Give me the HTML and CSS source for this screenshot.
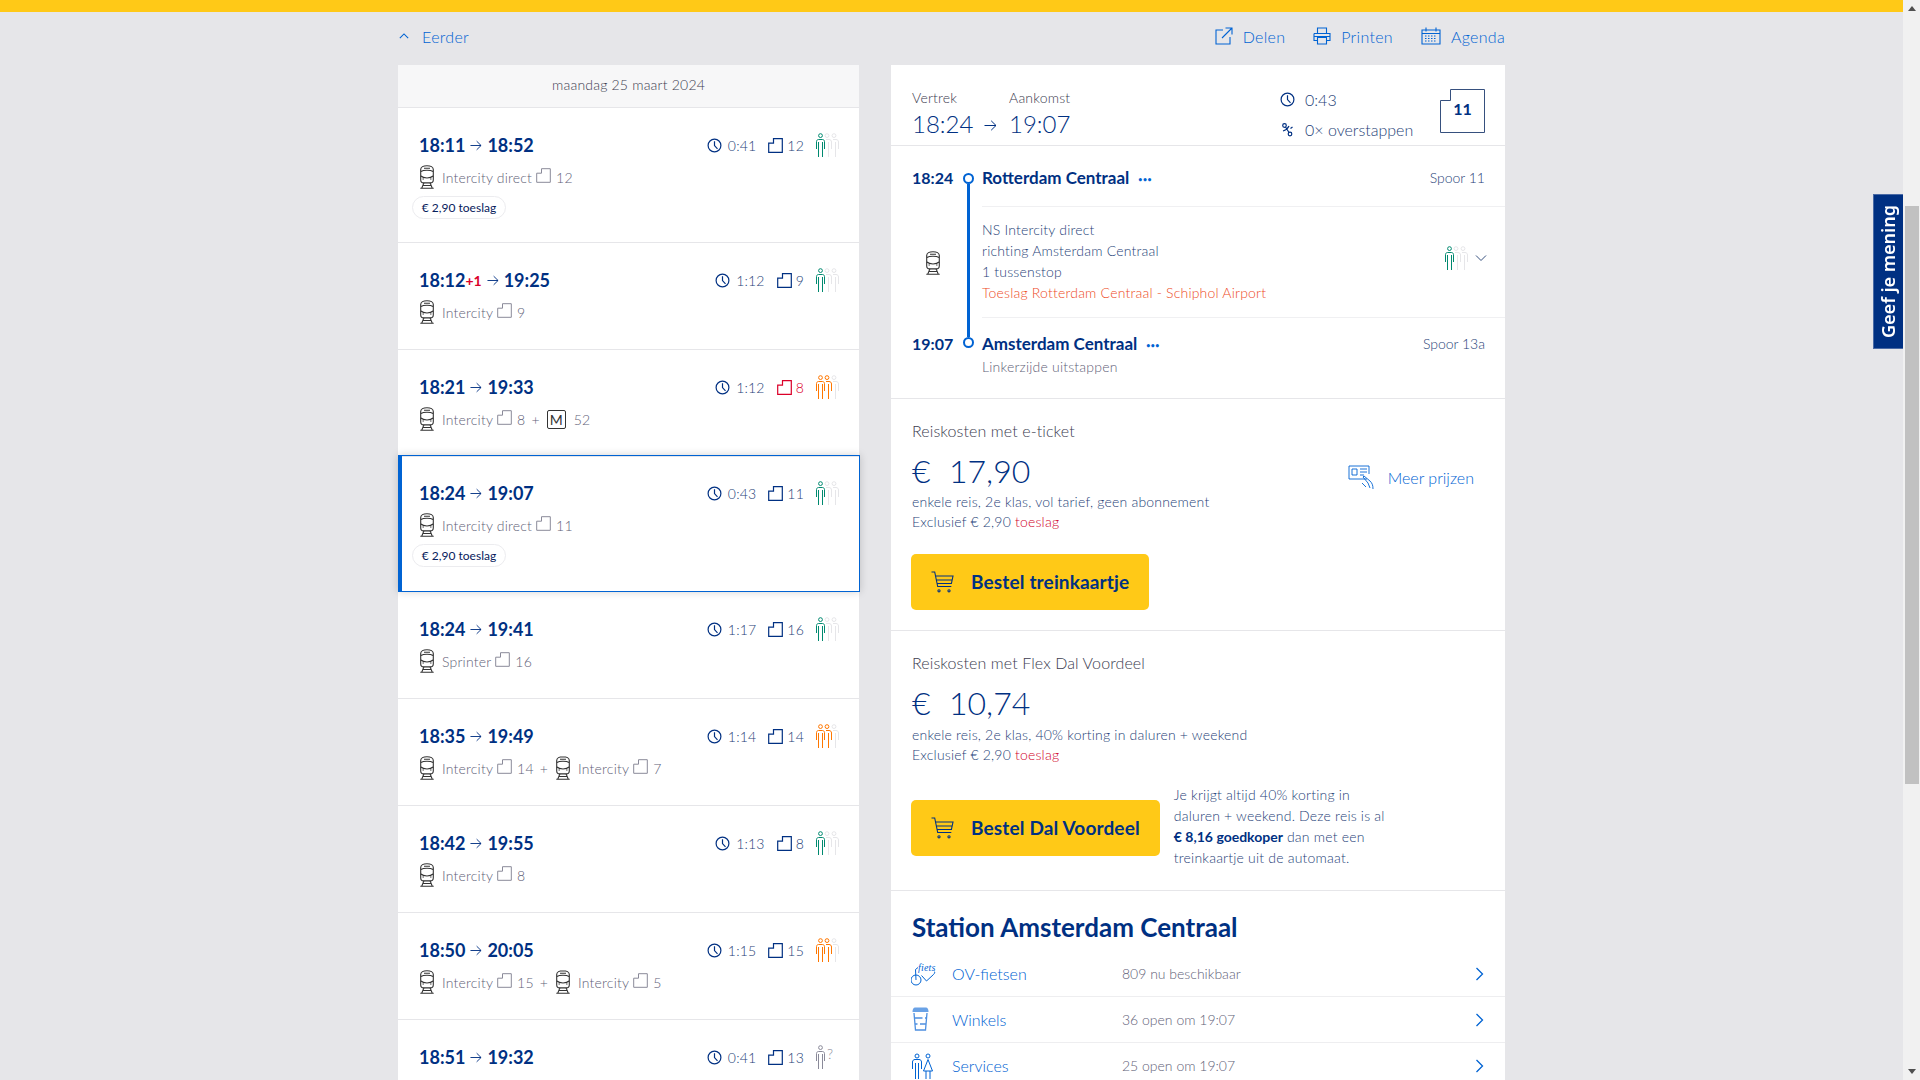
FILE: index.html

```html
<!DOCTYPE html>
<html lang="nl">
<head>
  <meta charset="UTF-8">
  <title>Reisplanner</title>
  <link rel="stylesheet" href="styles.css">
</head>
<body>
  <svg class="defs" width="0" height="0">
    <symbol id="i-clock" viewBox="0 0 15 15"><circle cx="7.5" cy="7.5" r="6.4"/><path d="M7.5 3.2v4.4l3 3.2"/></symbol>
    <symbol id="i-platform" viewBox="0 0 15 15"><path d="M5.5.7h8.8v13.6H.7V5.2h4.8z"/></symbol>
    <symbol id="i-arrow" viewBox="0 0 13 11"><path d="M.5 5.5h11.5M7.2.8l4.8 4.7-4.8 4.7"/></symbol>
    <symbol id="i-train" viewBox="0 0 15 24"><path d="M7.5.8C3.8.8 1.2 1.8 1.2 4.5v10.2c0 2 1.3 3.2 3 3.2h6.6c1.7 0 3-1.2 3-3.2V4.5C13.8 1.8 11.2.8 7.5.8z"/><path d="M1.4 6.5c2.6-1.6 9.6-1.6 12.2 0M1.4 11c2.6 2.6 9.6 2.6 12.2 0M4.5 3.2h6M4.4 17.9l-2.2 5.3M10.6 17.9l2.2 5.3M.8 23.2h13.4M3.3 20.5h8.4M3 14h1.4M10.6 14H12"/></symbol>
    <symbol id="i-crowd" viewBox="0 0 24 24">
      <g class="p3"><circle cx="19" cy="2.600" r="1.900"/><path d="M18 6.500h3c1.500 0 2.500 1 2.500 2.500v7M20.500 24V9"/></g>
      <g class="p2"><circle cx="12" cy="2.600" r="1.900"/><path d="M11 6.500h3c1.500 0 2.500 1 2.500 2.500v7M13.500 24V9"/></g>
      <g class="p1"><circle cx="5.500" cy="2.600" r="1.900"/><path d="M1.500 16V8.500c0-1.100.9-2 2-2h4c1.100 0 2 .9 2 2V16M3.500 24V9M7.500 24V9"/></g>
    </symbol>
    <symbol id="i-crowd-unknown" viewBox="0 0 24 24">
      <g class="p1"><circle cx="5.500" cy="2.600" r="1.900"/><path d="M1.500 16V8.500c0-1.100.9-2 2-2h4c1.100 0 2 .9 2 2V16M3.500 24V9M7.500 24V9"/></g>
    </symbol>
    <symbol id="i-chevron" viewBox="0 0 12 12"><path d="M1 3.5l5 5 5-5"/></symbol>
    <symbol id="i-next" viewBox="0 0 9 14"><path d="M1.5 1l6 6-6 6"/></symbol>
    <symbol id="i-cart" viewBox="0 0 23 22"><path d="M.5 1h3.2l3 14.5h13.6M4.5 5h17.5l-1.6 7.5H6.100M5.500 9h16"/><circle cx="8" cy="19.800" r="1.100"/><circle cx="18" cy="19.800" r="1.100"/></symbol>
  </svg>

  <div class="viewport">
    <div class="main">
      <div class="topbar"></div>
      <div class="content">
        <div class="toolbar">
          <a class="link earlier"><svg class="ico-up"><use href="#i-chevron"/></svg>Eerder</a>
          <div class="actions">
            <a class="link action">
              <svg class="ico-action" viewBox="0 0 18 18"><path d="M8 3H1v14h14v-7M7 11L16.500 1.500M10.500 1H17v6.500"/></svg>Delen
            </a>
            <a class="link action">
              <svg class="ico-action" viewBox="0 0 18 18"><path d="M4.500 6V1h9v5M1 6.500h16v7h-3.500M4.500 13.500H1v-7M4.500 10.500h9V17h-9zM1 9.500h16"/></svg>Printen
            </a>
            <a class="link action">
              <svg class="ico-action wide" viewBox="0 0 20 18"><path d="M1 3h18v14H1zM1 6.500h18M5 .5v4M15 .5v4"/><path class="dots" d="M4 9h12M4 11.500h12M4 14h12"/></svg>Agenda
            </a>
          </div>
        </div>

        <div class="columns">
          <section class="trips">
            <div class="date">maandag 25 maart 2024</div>

            <article class="trip">
              <div class="trip-head">
                <div class="trip-times">18:11<svg class="ico-arrow"><use href="#i-arrow"/></svg>18:52</div>
                <div class="trip-stats">
                  <svg class="ico-clock"><use href="#i-clock"/></svg><span class="dur">0:41</span>
                  <svg class="ico-plat"><use href="#i-platform"/></svg><span class="num">12</span>
                  <svg class="crowd one"><use href="#i-crowd"/></svg>
                </div>
              </div>
              <div class="legs">
                <svg class="ico-train"><use href="#i-train"/></svg><span>Intercity direct</span>
                <svg class="ico-plat-grey"><use href="#i-platform"/></svg><span>12</span>
              </div>
              <div class="pill">€ 2,90 toeslag</div>
            </article>

            <article class="trip">
              <div class="trip-head">
                <div class="trip-times">18:12<span class="delay">+1</span><svg class="ico-arrow"><use href="#i-arrow"/></svg>19:25</div>
                <div class="trip-stats">
                  <svg class="ico-clock"><use href="#i-clock"/></svg><span class="dur">1:12</span>
                  <svg class="ico-plat"><use href="#i-platform"/></svg><span class="num">9</span>
                  <svg class="crowd one"><use href="#i-crowd"/></svg>
                </div>
              </div>
              <div class="legs">
                <svg class="ico-train"><use href="#i-train"/></svg><span>Intercity</span>
                <svg class="ico-plat-grey"><use href="#i-platform"/></svg><span>9</span>
              </div>
            </article>

            <article class="trip">
              <div class="trip-head">
                <div class="trip-times">18:21<svg class="ico-arrow"><use href="#i-arrow"/></svg>19:33</div>
                <div class="trip-stats">
                  <svg class="ico-clock"><use href="#i-clock"/></svg><span class="dur">1:12</span>
                  <svg class="ico-plat changed"><use href="#i-platform"/></svg><span class="num changed">8</span>
                  <svg class="crowd two"><use href="#i-crowd"/></svg>
                </div>
              </div>
              <div class="legs">
                <svg class="ico-train"><use href="#i-train"/></svg><span>Intercity</span>
                <svg class="ico-plat-grey"><use href="#i-platform"/></svg><span>8</span>
                <span class="plus">+</span><span class="metro">M</span><span class="metro-num">52</span>
              </div>
            </article>

            <article class="trip selected">
              <div class="trip-head">
                <div class="trip-times">18:24<svg class="ico-arrow"><use href="#i-arrow"/></svg>19:07</div>
                <div class="trip-stats">
                  <svg class="ico-clock"><use href="#i-clock"/></svg><span class="dur">0:43</span>
                  <svg class="ico-plat"><use href="#i-platform"/></svg><span class="num">11</span>
                  <svg class="crowd one"><use href="#i-crowd"/></svg>
                </div>
              </div>
              <div class="legs">
                <svg class="ico-train"><use href="#i-train"/></svg><span>Intercity direct</span>
                <svg class="ico-plat-grey"><use href="#i-platform"/></svg><span>11</span>
              </div>
              <div class="pill">€ 2,90 toeslag</div>
            </article>

            <article class="trip">
              <div class="trip-head">
                <div class="trip-times">18:24<svg class="ico-arrow"><use href="#i-arrow"/></svg>19:41</div>
                <div class="trip-stats">
                  <svg class="ico-clock"><use href="#i-clock"/></svg><span class="dur">1:17</span>
                  <svg class="ico-plat"><use href="#i-platform"/></svg><span class="num">16</span>
                  <svg class="crowd one"><use href="#i-crowd"/></svg>
                </div>
              </div>
              <div class="legs">
                <svg class="ico-train"><use href="#i-train"/></svg><span>Sprinter</span>
                <svg class="ico-plat-grey"><use href="#i-platform"/></svg><span>16</span>
              </div>
            </article>

            <article class="trip">
              <div class="trip-head">
                <div class="trip-times">18:35<svg class="ico-arrow"><use href="#i-arrow"/></svg>19:49</div>
                <div class="trip-stats">
                  <svg class="ico-clock"><use href="#i-clock"/></svg><span class="dur">1:14</span>
                  <svg class="ico-plat"><use href="#i-platform"/></svg><span class="num">14</span>
                  <svg class="crowd two"><use href="#i-crowd"/></svg>
                </div>
              </div>
              <div class="legs">
                <svg class="ico-train"><use href="#i-train"/></svg><span>Intercity</span>
                <svg class="ico-plat-grey"><use href="#i-platform"/></svg><span>14</span>
                <span class="plus">+</span>
                <svg class="ico-train"><use href="#i-train"/></svg><span>Intercity</span>
                <svg class="ico-plat-grey"><use href="#i-platform"/></svg><span>7</span>
              </div>
            </article>

            <article class="trip">
              <div class="trip-head">
                <div class="trip-times">18:42<svg class="ico-arrow"><use href="#i-arrow"/></svg>19:55</div>
                <div class="trip-stats">
                  <svg class="ico-clock"><use href="#i-clock"/></svg><span class="dur">1:13</span>
                  <svg class="ico-plat"><use href="#i-platform"/></svg><span class="num">8</span>
                  <svg class="crowd one"><use href="#i-crowd"/></svg>
                </div>
              </div>
              <div class="legs">
                <svg class="ico-train"><use href="#i-train"/></svg><span>Intercity</span>
                <svg class="ico-plat-grey"><use href="#i-platform"/></svg><span>8</span>
              </div>
            </article>

            <article class="trip">
              <div class="trip-head">
                <div class="trip-times">18:50<svg class="ico-arrow"><use href="#i-arrow"/></svg>20:05</div>
                <div class="trip-stats">
                  <svg class="ico-clock"><use href="#i-clock"/></svg><span class="dur">1:15</span>
                  <svg class="ico-plat"><use href="#i-platform"/></svg><span class="num">15</span>
                  <svg class="crowd two"><use href="#i-crowd"/></svg>
                </div>
              </div>
              <div class="legs">
                <svg class="ico-train"><use href="#i-train"/></svg><span>Intercity</span>
                <svg class="ico-plat-grey"><use href="#i-platform"/></svg><span>15</span>
                <span class="plus">+</span>
                <svg class="ico-train"><use href="#i-train"/></svg><span>Intercity</span>
                <svg class="ico-plat-grey"><use href="#i-platform"/></svg><span>5</span>
              </div>
            </article>

            <article class="trip">
              <div class="trip-head">
                <div class="trip-times">18:51<svg class="ico-arrow"><use href="#i-arrow"/></svg>19:32</div>
                <div class="trip-stats">
                  <svg class="ico-clock"><use href="#i-clock"/></svg><span class="dur">0:41</span>
                  <svg class="ico-plat"><use href="#i-platform"/></svg><span class="num">13</span>
                  <span class="crowd-q"><svg class="crowd unknown"><use href="#i-crowd-unknown"/></svg><span class="q">?</span></span>
                </div>
              </div>
            </article>
          </section>

          <section class="detail">
            <header class="summary">
              <div class="sum-times">
                <span class="sum-label">Vertrek</span><span class="sum-label">Aankomst</span>
                <span class="sum-time">18:24<svg class="ico-arrow big"><use href="#i-arrow"/></svg></span><span class="sum-time">19:07</span>
              </div>
              <div class="sum-stats">
                <div class="sum-stat"><svg class="ico-clock"><use href="#i-clock"/></svg>0:43</div>
                <div class="sum-stat">
                  <svg class="ico-clock" viewBox="0 0 15 15"><circle cx="4.500" cy="3.500" r="1.800"/><circle cx="10" cy="12" r="1.800"/><path d="M5.500 5l3.500 5.500M9 4c-1.500 3-4 4.500-6 5M12.500 5l-2 1.500"/></svg>0× overstappen
                </div>
              </div>
              <div class="sum-spoor">
                <svg class="spoor-shape" viewBox="0 0 45 44"><path d="M10.500.5h34v43H.5V11.500h10z"/></svg>
                <span class="spoor-num">11</span>
              </div>
            </header>

            <div class="route">
              <div class="rail"><span class="rail-dot"></span><span class="rail-line"></span><span class="rail-dot"></span></div>

              <div class="stop-time">18:24</div>
              <div class="stop first">
                <div class="stop-name">Rotterdam Centraal<span class="more-dots">•••</span></div>
                <div class="spoor">Spoor 11</div>
              </div>

              <div class="ride-icon"><svg class="ico-train light"><use href="#i-train"/></svg></div>
              <div class="ride">
                <div class="ride-text">
                  <div>NS Intercity direct</div>
                  <div>richting Amsterdam Centraal</div>
                  <div>1 tussenstop</div>
                  <div class="surcharge">Toeslag Rotterdam Centraal - Schiphol Airport</div>
                </div>
                <div class="ride-side">
                  <svg class="crowd one"><use href="#i-crowd"/></svg>
                  <svg class="ico-down"><use href="#i-chevron"/></svg>
                </div>
              </div>

              <div class="stop-time last-time">19:07</div>
              <div class="stop last">
                <div>
                  <div class="stop-name">Amsterdam Centraal<span class="more-dots">•••</span></div>
                  <div class="stop-note">Linkerzijde uitstappen</div>
                </div>
                <div class="spoor">Spoor 13a</div>
              </div>
            </div>

            <div class="fare">
              <div class="fare-top">
                <div>
                  <div class="fare-title">Reiskosten met e-ticket</div>
                  <div class="fare-price"><span class="euro">€</span>17,90</div>
                  <div class="fare-line">enkele reis, 2e klas, vol tarief, geen abonnement</div>
                  <div class="fare-line">Exclusief € 2,90 <span class="red">toeslag</span></div>
                </div>
                <a class="link more-prices">
                  <svg class="ico-prices" viewBox="0 0 28 24"><path d="M19 14H1V1h20v8M4 4h5v6H4zM12 4h7M12 7h7M12 10h4M15 12l5 6 2 5M15 12l1-1 6 5c2 2 3 4 3 8M14 18l4 4"/></svg>Meer prijzen
                </a>
              </div>
              <div class="fare-order">
                <a class="btn"><svg class="ico-cart"><use href="#i-cart"/></svg>Bestel treinkaartje</a>
              </div>
            </div>

            <div class="fare flex">
              <div class="fare-title">Reiskosten met Flex Dal Voordeel</div>
              <div class="fare-price"><span class="euro">€</span>10,74</div>
              <div class="fare-line">enkele reis, 2e klas, 40% korting in daluren + weekend</div>
              <div class="fare-line">Exclusief € 2,90 <span class="red">toeslag</span></div>
              <div class="fare-order with-note">
                <a class="btn"><svg class="ico-cart"><use href="#i-cart"/></svg>Bestel Dal Voordeel</a>
                <p class="fare-note">Je krijgt altijd 40% korting in<br>daluren + weekend. Deze reis is al<br><strong>€ 8,16 goedkoper</strong> dan met een<br>treinkaartje uit de automaat.</p>
              </div>
            </div>

            <div class="station">
              <h2>Station Amsterdam Centraal</h2>
              <a class="facility">
                <svg class="ico-fac" viewBox="0 0 26 26"><text class="fiets" x="7" y="10">fiets</text><circle cx="5" cy="19" r="5"/><path d="M5 19L4.500 8.500 7 6.500M10.500 14.500l5 5.500 7-6.500c1.500-1.500 1.500-2.500.5-3"/></svg>
                <span class="fac-name">OV-fietsen</span><span class="fac-meta">809 nu beschikbaar</span>
                <svg class="ico-next"><use href="#i-next"/></svg>
              </a>
              <a class="facility">
                <svg class="ico-fac cup" viewBox="0 0 26 26"><path class="solid" d="M4 .5h11c1.500 0 2.500 1.500 2.500 4.500H1.500C1.500 2 2.500.5 4 .5z"/><path d="M3 6l1.500 17h10L16 6M3.500 11h8M14 11h2M4.500 17h2M9 17h6.500"/></svg>
                <span class="fac-name">Winkels</span><span class="fac-meta">36 open om 19:07</span>
                <svg class="ico-next"><use href="#i-next"/></svg>
              </a>
              <a class="facility">
                <svg class="ico-fac" viewBox="0 0 26 26"><circle cx="6" cy="3" r="2"/><circle cx="17" cy="3" r="2"/><path d="M1.500 16V9c0-1.500 1-2.500 2.500-2.500h4c1.500 0 2.500 1 2.500 2.500v7M4.500 26V10M7.500 26V10M17 6.500l-4.500 11.500h9L17 6.500zM15 18v8M19 18v8"/></svg>
                <span class="fac-name">Services</span><span class="fac-meta">25 open om 19:07</span>
                <svg class="ico-next"><use href="#i-next"/></svg>
              </a>
            </div>
          </section>
        </div>
      </div>
    </div>

    <div class="scrollbar">
      <span class="sb-up"></span>
      <span class="sb-track short"></span>
      <span class="sb-thumb"></span>
      <span class="sb-track"></span>
      <span class="sb-down"></span>
    </div>
  </div>

  <a class="feedback">Geef je mening</a>
</body>
</html>
```

FILE: styles.css

```css
/* base */
* {
  box-sizing: border-box;
}

html,
body {
  height: 100%;
  margin: 0;
  overflow: hidden;
}

body {
  font-family: Lato, "Open Sans", sans-serif;
  font-size: 14px;
  font-weight: 300;
  letter-spacing: 0.2px;
  color: #003082;
  background-color: #e6e6e9;
}

svg {
  display: block;
  flex: none;
  fill: none;
  stroke: currentColor;
}

.defs {
  position: absolute;
}

.link {
  color: #0063d3;
}

.viewport {
  display: flex;
  height: 1080px;
}

.main {
  flex: 1;
  min-width: 0;
  overflow: hidden;
}

.topbar {
  height: 12px;
  background-color: #ffc917;
}

.content {
  width: 1107px;
  margin: 0 auto;
}

/* toolbar */
.toolbar {
  display: flex;
  justify-content: space-between;
  align-items: center;
  height: 53px;
  padding-bottom: 5px;
  font-size: 16px;
  letter-spacing: 0.3px;
}

.earlier {
  display: flex;
  align-items: center;
  gap: 13px;
}

.ico-up {
  width: 10px;
  height: 10px;
  margin-left: 1px;
  transform: rotate(180deg);
  stroke-width: 1.300;
}

.actions {
  display: flex;
  gap: 28px;
}

.action {
  display: flex;
  align-items: center;
  gap: 10px;
}

.ico-action {
  width: 18px;
  height: 18px;
  stroke-width: 1.1;
}

.ico-action.wide {
  width: 20px;
}

.ico-action .dots {
  stroke-dasharray: 1.500 1.500;
}

/* columns */
.columns {
  display: flex;
  justify-content: space-between;
  align-items: flex-start;
}

.trips {
  width: 461px;
  background-color: #fff;
}

.detail {
  width: 614px;
  background-color: #fff;
}

.date {
  height: 43px;
  padding-top: 11px;
  text-align: center;
  color: #3c3c50;
  background-color: #f7f7f8;
  border-bottom: 1px solid #e6e6e9;
}

/* trip rows */
.trip {
  padding: 23px 20px 23px 21px;
  border-bottom: 1px solid #e6e6e9;
}

.trip.selected {
  position: relative;
  width: 462px;
  margin-top: -2px;
  padding: 23px 20px 24px 17px;
  border: 1px solid #0063d3;
  border-left-width: 4px;
  box-shadow: 0 0 8px rgba(0, 0, 0, 0.18);
}

.trip-head {
  display: flex;
  justify-content: space-between;
  align-items: center;
  height: 28px;
}

.trip-times {
  display: flex;
  align-items: center;
  font-size: 18px;
  font-weight: 700;
  letter-spacing: 0;
}

.ico-arrow {
  width: 12px;
  height: 11px;
  margin: 1px 5px 0;
  stroke-width: 1;
}

.ico-arrow.big {
  display: inline-block;
  width: 13px;
  margin: 4px 0 0 11px;
}

.delay {
  font-size: 14px;
  font-weight: 700;
  color: #db0029;
}

.trip-stats {
  display: flex;
  align-items: center;
  color: #1f3f78;
}

.ico-clock {
  width: 15px;
  height: 15px;
  color: #003082;
  stroke-width: 1.200;
}

.dur {
  margin: 0 12px 0 6px;
}

.ico-plat {
  width: 15px;
  height: 15px;
  color: #003082;
  stroke-width: 1.200;
}

.num {
  margin-left: 4px;
}

.changed {
  color: #db0029;
}

.crowd {
  width: 24px;
  height: 24px;
  margin-left: 11px;
  stroke-width: 1;
  --p1: #00896f;
  --p2: #e6e6e9;
  --p3: #e6e6e9;
}

.crowd.two {
  --p1: #ff7700;
  --p2: #ff7700;
}

.crowd.unknown {
  --p1: #8a8a99;
}

.p1 {
  stroke: var(--p1);
}

.p2 {
  stroke: var(--p2);
}

.p3 {
  stroke: var(--p3);
}

.crowd-q {
  display: flex;
  width: 35px;
}

.q {
  margin-left: -12px;
  color: #8a8a99;
}

.legs {
  display: flex;
  align-items: center;
  height: 26px;
  margin: 5px 0 1px;
  color: #5f6278;
}

.ico-train {
  width: 16px;
  height: 24px;
  margin-right: 7px;
  color: #333;
  stroke-width: 1.100;
}

.ride-icon .ico-train {
  margin-right: 0;
}

.ico-plat-grey {
  width: 15px;
  height: 15px;
  margin: -4px 5px 0 4px;
  color: #8a8a99;
  stroke-width: 1;
}

.plus {
  margin: 0 7px 0 6px;
}

.metro {
  width: 19px;
  height: 19px;
  margin-right: 8px;
  font-weight: 400;
  line-height: 17px;
  text-align: center;
  color: #333;
  border: 1px solid #333;
  border-radius: 2px;
}

.pill {
  width: 94px;
  height: 23px;
  margin: 6px 0 0 -7px;
  font-size: 12px;
  font-weight: 400;
  letter-spacing: 0;
  line-height: 21px;
  text-align: center;
  color: #07215c;
  border: 1px solid #ececef;
  border-radius: 12px;
}

/* detail header */
.summary {
  display: flex;
  height: 81px;
  padding: 24px 20px 0 21px;
  border-bottom: 1px solid #e6e6e9;
}

.sum-times {
  flex: 1;
  display: grid;
  grid-template-columns: 97px 1fr;
  grid-template-rows: 20px 28px;
}

.sum-label {
  color: #3c3c50;
}

.sum-time {
  display: flex;
  align-items: center;
  font-size: 24px;
  font-weight: 300;
  letter-spacing: 0;
}

.sum-stats {
  display: flex;
  flex-direction: column;
  gap: 9px;
  width: 160px;
}

.sum-stat {
  display: flex;
  align-items: center;
  gap: 10px;
  height: 21px;
  font-size: 16px;
  letter-spacing: 0;
  color: #1f3f78;
}

.sum-spoor {
  display: grid;
  width: 45px;
  height: 44px;
}

.spoor-shape {
  grid-area: 1 / 1;
  width: 45px;
  height: 44px;
  color: #36507e;
}

.spoor-num {
  grid-area: 1 / 1;
  padding-top: 10px;
  text-align: center;
  font-size: 16px;
  font-weight: 700;
  letter-spacing: 0;
}

/* route */
.route {
  display: grid;
  grid-template-columns: 46px 20px 1fr;
  padding-left: 21px;
  border-bottom: 1px solid #e6e6e9;
}

.rail {
  grid-column: 2;
  grid-row: 1 / 4;
  display: flex;
  flex-direction: column;
  align-items: center;
  margin: 27px 0 50px;
}

.rail-dot {
  width: 11px;
  height: 11px;
  border: 2px solid #0063d3;
  border-radius: 50%;
}

.rail-line {
  flex: 1;
  width: 3px;
  background-color: #0063d3;
}

.stop-time {
  grid-column: 1;
  padding-top: 20px;
  font-size: 16px;
  line-height: 24px;
  font-weight: 700;
  letter-spacing: 0;
}

.stop-time.last-time {
  padding-top: 14px;
}

.stop,
.ride {
  grid-column: 3;
  display: flex;
  justify-content: space-between;
  margin-left: 4px;
}

.stop.first {
  height: 61px;
  padding: 20px 20px 0 0;
  border-bottom: 1px solid #f0f0f2;
}

.stop.last {
  padding: 14px 20px 21px 0;
}

.stop-name {
  font-size: 17px;
  line-height: 24px;
  font-weight: 700;
  letter-spacing: 0;
}

.more-dots {
  margin-left: 9px;
  font-size: 7px;
  letter-spacing: 0.5px;
  vertical-align: 2px;
  color: #0063d3;
}

.spoor {
  line-height: 24px;
  letter-spacing: 0;
  color: #1f3f78;
}

.stop-note {
  margin-top: -1px;
  line-height: 21px;
  color: #5f6278;
}

.ride-icon {
  grid-column: 1;
  display: flex;
  align-items: center;
  justify-content: center;
  padding-right: 5px;
}

.ride {
  align-items: center;
  height: 111px;
  padding: 0 18px 2px 0;
  color: #1f3f78;
  border-bottom: 1px solid #f0f0f2;
}

.ride-text {
  line-height: 21px;
}

.surcharge {
  color: #ee4a1e;
}

.ride-side {
  display: flex;
  align-items: center;
  gap: 7px;
  margin-top: -6px;
}

.ride-side .crowd {
  margin-left: 0;
}

.ico-down {
  width: 12px;
  height: 12px;
  color: #36507e;
}

/* fares */
.fare {
  padding: 22px 21px 20px;
  border-bottom: 1px solid #e6e6e9;
}

.fare-top {
  display: flex;
  justify-content: space-between;
}

.fare-title {
  font-size: 16px;
  line-height: 20px;
  letter-spacing: 0.1px;
  color: #3c3c50;
}

.fare-price {
  height: 40px;
  margin-top: 10px;
  font-size: 32px;
  line-height: 40px;
  font-weight: 300;
  letter-spacing: 0;
}

.flex .fare-price {
  margin-bottom: 2px;
}

.fare-price + .fare-line {
  margin-top: 1px;
}

.euro {
  display: inline-block;
  width: 37px;
}

.fare-line {
  line-height: 20px;
  color: #1f3f78;
}

.red {
  color: #d0002a;
}

.more-prices {
  display: flex;
  align-items: center;
  gap: 12px;
  height: 24px;
  margin: 44px 10px 0 0;
  font-size: 16px;
  letter-spacing: 0;
}

.ico-prices {
  width: 28px;
  height: 24px;
  stroke-width: 0.9;
}

.fare-order {
  margin: 22px 0 0 -1px;
}

.fare-order.with-note {
  display: flex;
  align-items: center;
  gap: 14px;
  margin-top: 21px;
}

.btn {
  display: inline-flex;
  align-items: center;
  gap: 17px;
  height: 56px;
  padding: 0 20px 2px;
  font-size: 19px;
  letter-spacing: 0.15px;
  font-weight: 700;
  background-color: #ffc917;
  border-radius: 5px;
}

.ico-cart {
  width: 23px;
  height: 22px;
  margin-top: 2px;
  stroke-width: 1.100;
}

.fare-note {
  margin: -2px 0 2px;
  line-height: 21px;
  color: #1f3f78;
  white-space: nowrap;
}

.fare-note strong {
  font-weight: 700;
  letter-spacing: 0;
  color: #003082;
}

/* station */
.station {
  padding-top: 20px;
}

.station h2 {
  margin: 0 0 8px 21px;
  font-size: 26px;
  line-height: 32px;
  font-weight: 700;
  letter-spacing: 0;
}

.facility {
  display: grid;
  grid-template-columns: 41px 170px 1fr 9px;
  align-items: center;
  height: 46px;
  padding: 0 21px 0 20px;
  border-bottom: 1px solid #eeeef0;
}

.ico-fac {
  width: 26px;
  height: 26px;
  color: #0063d3;
  stroke-width: 1;
}

.cup {
  color: #4d8fe0;
  stroke-width: 1.300;
}

.solid {
  fill: #6aa2e6;
  stroke: none;
}

.fiets {
  font-family: "Liberation Serif", serif;
  font-size: 10px;
  font-style: italic;
  stroke: none;
  fill: #0063d3;
}

.fac-name {
  font-size: 16px;
  letter-spacing: 0;
  color: #0063d3;
}

.fac-meta {
  letter-spacing: 0;
  color: #5f6278;
}

.ico-next {
  width: 9px;
  height: 14px;
  color: #0063d3;
  stroke-width: 1.300;
}

/* scrollbar */
.scrollbar {
  display: flex;
  flex-direction: column;
  align-items: center;
  flex: none;
  width: 17px;
  background-color: #f1f1f1;
}

.sb-up,
.sb-down {
  flex: none;
  width: 0;
  height: 0;
  margin: 6px 0 6px;
  border-left: 4px solid transparent;
  border-right: 4px solid transparent;
}

.sb-up {
  border-bottom: 5px solid #505050;
}

.sb-down {
  border-top: 5px solid #505050;
}

.sb-track {
  flex: 1;
}

.sb-track.short {
  flex: none;
  height: 189px;
}

.sb-thumb {
  flex: none;
  width: 14px;
  height: 578px;
  margin-left: 1px;
  background-color: #c1c1c1;
}

/* feedback tab */
.feedback {
  position: fixed;
  top: 194px;
  right: 17px;
  width: 30px;
  height: 155px;
  display: flex;
  align-items: center;
  justify-content: center;
  writing-mode: vertical-rl;
  transform: rotate(180deg);
  font-family: "Noto Sans", sans-serif;
  font-size: 18px;
  font-weight: 600;
  letter-spacing: 0;
  color: #fff;
  background-color: #003082;
  border: 1px solid #4a6aa5;
  border-left: 0;
}
```
